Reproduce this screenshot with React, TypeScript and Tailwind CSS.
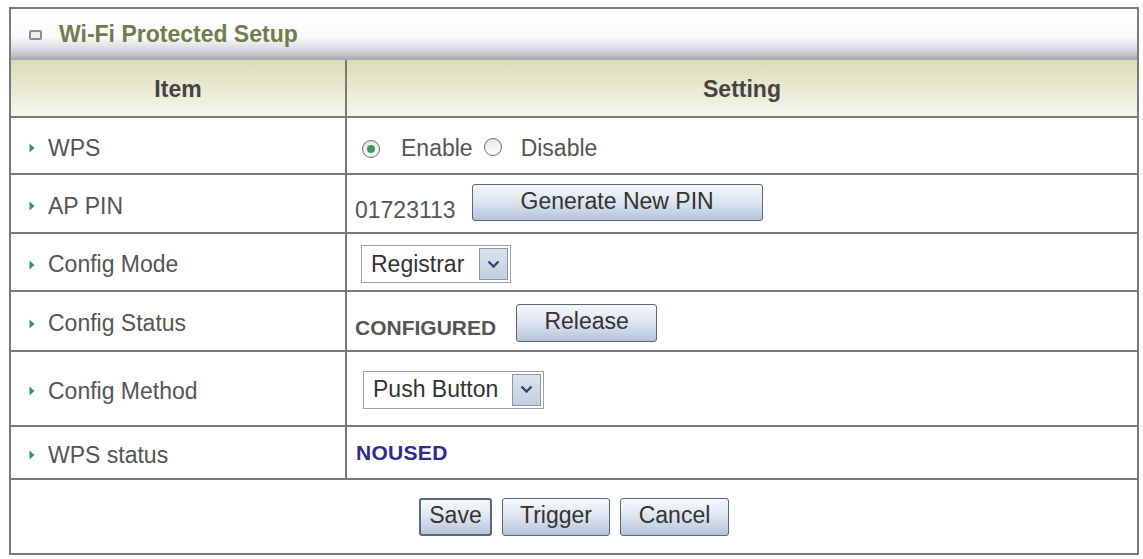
import React from 'react';

const rows = [
  { label: 'WPS', h: 'h-[57px]' },
  { label: 'AP PIN', h: 'h-[59px]' },
  { label: 'Config Mode', h: 'h-[58px]' },
  { label: 'Config Status', h: 'h-[60px]' },
  { label: 'Config Method', h: 'h-[75px]' },
  { label: 'WPS status', h: 'h-[53px]' },
];

const Arrow = () => (
  <svg width="8" height="12" viewBox="0 0 8 12" className="mr-[12px] shrink-0">
    <path d="M1.5 1.5 L6.5 6 L1.5 10.5 Z" fill="#3c8c82" />
  </svg>
);

const Radio = ({ checked }: { checked?: boolean }) => (
  <span className="inline-flex shrink-0 items-center justify-center w-[18px] h-[18px] rounded-full border-[1.5px] border-[#5f6f68] bg-gradient-to-b from-[#e4e8e6] to-white">
    {checked && <span className="w-[8px] h-[8px] rounded-full bg-[#3f9a55]" />}
  </span>
);

const Btn = ({ children, className = '' }: { children: React.ReactNode; className?: string }) => (
  <button
    className={`flex items-center justify-center rounded-[3px] border border-[#5b6878] bg-gradient-to-b from-[#f6f8fc] via-[#dde4ef] to-[#b5c3d9] text-[#333] text-[23px] leading-none pb-[3px] ${className}`}
  >
    {children}
  </button>
);

const Select = ({ value, className = '' }: { value: string; className?: string }) => (
  <div className={`flex items-stretch h-[38px] border border-[#a0a0a0] bg-white ${className}`}>
    <span className="flex-1 flex items-center pl-[9px] text-[23px] text-[#333]">{value}</span>
    <span className="w-[29px] my-[2px] mr-[2px] flex items-center justify-center border border-[#8a96a8] bg-gradient-to-b from-[#dbe3ee] to-[#c3cfdf]">
      <svg width="13" height="9" viewBox="0 0 13 9">
        <path d="M1.5 1.5 L6.5 6.5 L11.5 1.5" stroke="#34466f" strokeWidth="2.4" fill="none" />
      </svg>
    </span>
  </div>
);

const settings: React.ReactNode[] = [
  <div className="flex items-center pl-[15px] pt-[6px] text-[#555]">
    <Radio checked />
    <span className="ml-[21px]">Enable</span>
    <span className="ml-[11px]"><Radio /></span>
    <span className="ml-[19px]">Disable</span>
  </div>,
  <div className="flex items-center pl-[8px] pt-[14px] text-[#555]">
    <span className="text-[23px]">01723113</span>
    <Btn className="ml-[16px] w-[291px] h-[37px] -mt-[16px]">Generate New PIN</Btn>
  </div>,
  <div className="flex items-center pl-[14px] pt-[4px]">
    <Select value="Registrar" className="w-[150px]" />
  </div>,
  <div className="flex items-center pl-[8px] text-[#555]">
    <span className="text-[21px] font-bold pt-[14px]">CONFIGURED</span>
    <Btn className="ml-[20px] w-[141px] h-[38px] mt-[4px]">Release</Btn>
  </div>,
  <div className="flex items-center pl-[16px] pt-[2px]">
    <Select value="Push Button" className="w-[181px]" />
  </div>,
  <div className="flex items-center pl-[9px]">
    <span className="text-[21px] font-bold text-[#2c2c8e] tracking-[0.3px]">NOUSED</span>
  </div>,
];

export default function App() {
  return (
    <div className="w-[1143px] h-[559px] bg-white pt-[7px] pl-[9px]" style={{ fontFamily: '"Liberation Sans", Arial, sans-serif' }}>
      <div className="w-[1130px] border-2 border-[#7a7a7a] flex flex-col text-[23px]">
        <div className="h-[51px] flex items-center pl-[18px] [background-image:linear-gradient(to_bottom,#ffffff_0%,#fafafa_55%,#d8d8de_80%,#a8a8b2_100%)]">
          <span className="w-[13px] h-[10px] border-2 border-[#8c8c8c] rounded-[2px] bg-[#eeeeee] mr-[17px]" />
          <span className="font-bold text-[#6f7d4e]">Wi-Fi Protected Setup</span>
        </div>
        <div className="h-[58px] flex border-b-2 border-[#7a7a7a] bg-gradient-to-b from-[#dcdcb6] to-[#f6f6ef]">
          <div className="w-[336px] border-r-2 border-[#7a7a7a] flex items-center justify-center pt-[3px] font-bold text-[#444]">Item</div>
          <div className="flex-1 flex items-center justify-center pt-[3px] font-bold text-[#444]">Setting</div>
        </div>
        {rows.map((r, i) => (
          <div key={r.label} className={`${r.h} flex border-b-2 border-[#7a7a7a]`}>
            <div className="w-[336px] border-r-2 border-[#7a7a7a] flex items-center pl-[17px] pt-[5px] text-[#555]">
              <Arrow />
              <span>{r.label}</span>
            </div>
            <div className="flex-1 flex items-center">{settings[i]}</div>
          </div>
        ))}
        <div className="h-[73px] flex items-center justify-center gap-[10px]">
          <Btn className="w-[73px] h-[38px] border-2 border-[#3f6494]">Save</Btn>
          <Btn className="w-[108px] h-[38px]">Trigger</Btn>
          <Btn className="w-[109px] h-[38px]">Cancel</Btn>
        </div>
      </div>
    </div>
  );
}
